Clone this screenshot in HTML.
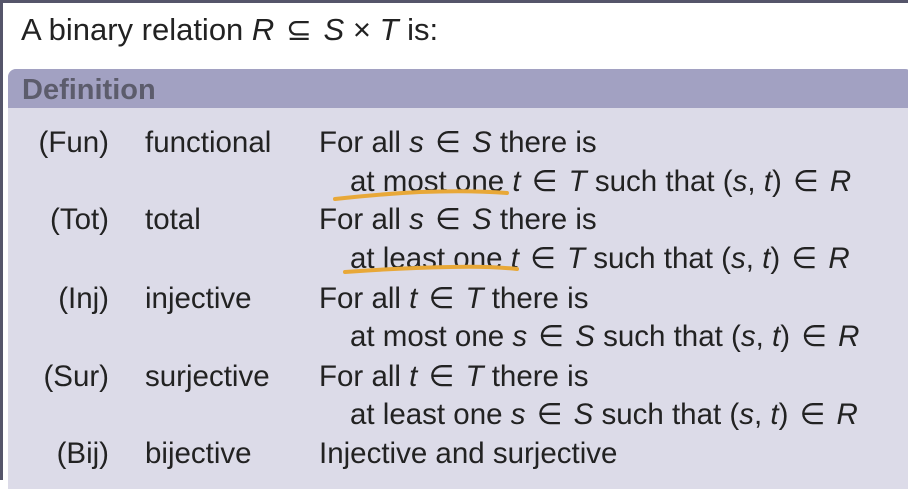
<!DOCTYPE html>
<html><head><meta charset="utf-8"><style>
html,body{margin:0;padding:0;}
body{width:908px;height:480px;overflow:hidden;background:#fff;position:relative;font-family:"Liberation Sans",sans-serif;color:#222;}
.frame{position:absolute;left:0;top:0;width:908px;height:480px;border-top:3px solid #55556a;border-left:3px solid #55556a;box-sizing:border-box;}
.t{position:absolute;font-size:29.5px;white-space:nowrap;line-height:1;}
i{font-family:"Liberation Sans",sans-serif;font-style:italic;}
b{font-weight:normal;margin:0 3px;}
.box{position:absolute;left:8px;top:69px;width:905px;height:420px;background:#dcdbe8;border-radius:8px 8px 0 0;overflow:hidden;}
.hd{position:absolute;left:0;top:0;width:100%;height:39px;background:#a2a1c2;}
.hd span{position:absolute;left:14px;top:5px;font-size:29px;font-weight:bold;color:#5c5c6c;}
.r{text-align:right;width:72px;}
</style></head><body>
<div class="frame"></div>
<div class="t" style="left:21px;top:14px;font-size:31px">A binary relation <i>R</i> <b>⊆</b> <i>S</i> × <i>T</i> is:</div>
<div class="box"><div class="hd"><span>Definition</span></div></div>

<div class="t r" style="left:37px;top:128px">(Fun)</div>
<div class="t" style="left:145px;top:128px">functional</div>
<div class="t" style="left:319px;top:128px">For all <i>s</i> <b>∈</b> <i>S</i> there is</div>
<div class="t" style="left:350px;top:167px">at most one <i>t</i> <b>∈</b> <i>T</i> such that (<i>s</i>, <i>t</i>) <b>∈</b> <i>R</i></div>

<div class="t r" style="left:37px;top:205px">(Tot)</div>
<div class="t" style="left:145px;top:205px">total</div>
<div class="t" style="left:319px;top:205px">For all <i>s</i> <b>∈</b> <i>S</i> there is</div>
<div class="t" style="left:350px;top:244px">at least one <i>t</i> <b>∈</b> <i>T</i> such that (<i>s</i>, <i>t</i>) <b>∈</b> <i>R</i></div>

<div class="t r" style="left:37px;top:284px">(Inj)</div>
<div class="t" style="left:145px;top:284px">injective</div>
<div class="t" style="left:319px;top:284px">For all <i>t</i> <b>∈</b> <i>T</i> there is</div>
<div class="t" style="left:350px;top:322px">at most one <i>s</i> <b>∈</b> <i>S</i> such that (<i>s</i>, <i>t</i>) <b>∈</b> <i>R</i></div>

<div class="t r" style="left:37px;top:362px">(Sur)</div>
<div class="t" style="left:145px;top:362px">surjective</div>
<div class="t" style="left:319px;top:362px">For all <i>t</i> <b>∈</b> <i>T</i> there is</div>
<div class="t" style="left:350px;top:400px">at least one <i>s</i> <b>∈</b> <i>S</i> such that (<i>s</i>, <i>t</i>) <b>∈</b> <i>R</i></div>

<div class="t r" style="left:37px;top:439px">(Bij)</div>
<div class="t" style="left:145px;top:439px">bijective</div>
<div class="t" style="left:319px;top:439px">Injective and surjective</div>

<svg style="position:absolute;left:0;top:0" width="908" height="480">
<path d="M335 199 Q380 194 420 192 Q470 190 507 193" stroke="#e8a838" stroke-width="4" fill="none" stroke-linecap="round"/>
<path d="M345 272 Q400 268 450 267 Q490 266 517 269" stroke="#e8a838" stroke-width="4" fill="none" stroke-linecap="round"/>
</svg>
</body></html>
